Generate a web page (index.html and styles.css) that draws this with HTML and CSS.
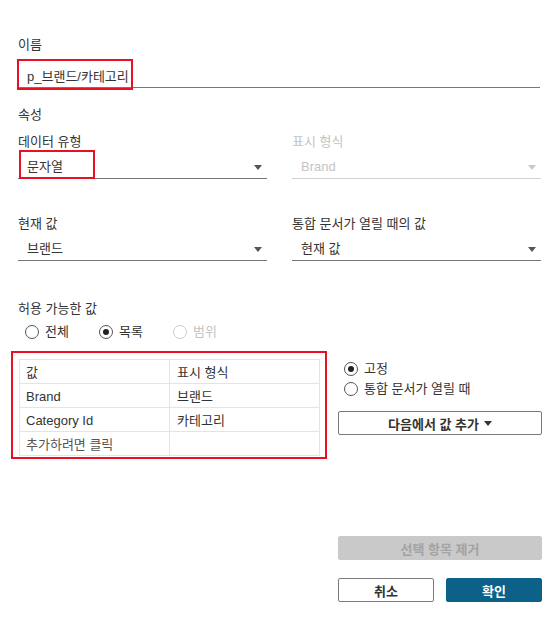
FILE: index.html
```html
<!DOCTYPE html>
<html lang="ko">
<head>
  <meta charset="UTF-8" />
  <title>매개 변수 편집</title>
  <link rel="stylesheet" href="styles.css">
</head>
<body>
  <div class="dialog">
    <div class="label first">이름</div>
    <div class="input">p_브랜드/카테고리<span class="annot annot-name"></span></div>

    <div class="section-title">속성</div>

    <div class="grid">
      <div class="field">
        <div class="label">데이터 유형</div>
        <div class="select">문자열<span class="caret"></span><span class="annot annot-type"></span></div>
      </div>
      <div class="field disabled">
        <div class="label">표시 형식</div>
        <div class="select">Brand<span class="caret"></span></div>
      </div>
      <div class="field">
        <div class="label">현재 값</div>
        <div class="select">브랜드<span class="caret"></span></div>
      </div>
      <div class="field">
        <div class="label">통합 문서가 열릴 때의 값</div>
        <div class="select">현재 값<span class="caret"></span></div>
      </div>
    </div>

    <div class="label allowed">허용 가능한 값</div>
    <div class="radio-row">
      <span class="radio"><span class="circle"></span>전체</span>
      <span class="radio"><span class="circle checked"></span>목록</span>
      <span class="radio disabled"><span class="circle"></span>범위</span>
    </div>

    <div class="list-area">
      <div class="table-wrap">
        <table class="values">
          <tr><td>값</td><td>표시 형식</td></tr>
          <tr><td>Brand</td><td>브랜드</td></tr>
          <tr><td>Category Id</td><td>카테고리</td></tr>
          <tr><td class="hint">추가하려면 클릭</td><td></td></tr>
        </table>
        <span class="annot annot-table"></span>
      </div>
      <div class="side">
        <div class="radio-list">
          <span class="radio"><span class="circle checked"></span>고정</span>
          <span class="radio"><span class="circle"></span>통합 문서가 열릴 때</span>
        </div>
        <button class="btn add-btn">다음에서 값 추가 <span class="small-caret"></span></button>
      </div>
    </div>

    <div class="footer">
      <button class="btn remove-btn">선택 항목 제거</button>
      <div class="footer-row">
        <button class="btn cancel-btn">취소</button>
        <button class="btn ok-btn">확인</button>
      </div>
    </div>
  </div>
</body>
</html>
```

FILE: styles.css
```css
* {
  box-sizing: border-box;
  margin: 0;
  padding: 0;
}

body {
  font-family: "Liberation Sans", "Noto Sans CJK KR", sans-serif;
  font-size: 13px;
  color: #333;
  background: #fff;
}

.dialog {
  width: 560px;
  padding: 35px 18px 0 18px;
}

/* text sits a little low in its line box, like the original */
.label {
  height: 18px;
  padding-top: 1px;
  line-height: 18px;
  color: #333;
}

.field .label {
  padding-top: 0;
}

.input {
  position: relative;
  width: 522px;
  height: 25px;
  margin-top: 10px;
  padding: 2px 0 0 9px;
  line-height: 24px;
  border-bottom: 1px solid #767676;
}

.section-title {
  height: 18px;
  margin-top: 17px;
  padding-top: 1px;
  line-height: 18px;
}

.grid {
  display: grid;
  grid-template-columns: 249px 249px;
  column-gap: 25px;
  row-gap: 36px;
  margin-top: 10px;
}

.select {
  position: relative;
  height: 24px;
  margin-top: 4px;
  padding: 1px 0 0 9px;
  line-height: 22px;
  border-bottom: 1px solid #767676;
}

.caret {
  position: absolute;
  right: 5px;
  top: 10px;
  border-left: 4px solid transparent;
  border-right: 4px solid transparent;
  border-top: 5px solid #555;
}

.disabled .label,
.disabled .select {
  color: #c4c4c4;
}

.disabled .select {
  border-bottom-color: #cfcfcf;
}

.disabled .caret {
  border-top-color: #c8c8c8;
}

.allowed {
  margin-top: 38px;
}

.radio-row {
  display: flex;
  margin-top: 6px;
  padding-left: 7px;
  height: 18px;
}

.radio-row .radio {
  width: 74px;
}

.radio {
  display: flex;
  align-items: center;
  gap: 6px;
  line-height: 18px;
}

.circle {
  width: 14px;
  height: 14px;
  border: 1px solid #555;
  border-radius: 50%;
  display: flex;
  align-items: center;
  justify-content: center;
  background: #fff;
}

.circle.checked::after {
  content: "";
  width: 6px;
  height: 6px;
  border-radius: 50%;
  background: #222;
}

.radio.disabled {
  color: #c4c4c4;
}

.radio.disabled .circle {
  border-color: #cdcdcd;
}

.list-area {
  display: flex;
  margin-top: 18px;
}

.table-wrap {
  position: relative;
  margin-left: 1px;
  width: 301px;
}

.values {
  width: 301px;
  border-collapse: collapse;
  table-layout: fixed;
}

.values td {
  height: 24px;
  border: 1px solid #e4e4e4;
  padding: 2px 6px 0 6px;
  line-height: 20px;
  color: #333;
}

.values td:first-child {
  width: 150px;
}

.values td:last-child {
  padding-left: 7px;
}

.values .hint {
  color: #555;
}

.side {
  width: 204px;
  margin-left: 18px;
  display: flex;
  flex-direction: column;
}

.radio-list {
  display: flex;
  flex-direction: column;
  gap: 2px;
  padding-left: 6px;
  margin-top: 1px;
}

.radio-list .radio {
  height: 18px;
}

.btn {
  font-family: inherit;
  font-size: 13px;
  font-weight: bold;
  height: 24px;
  border-radius: 2px;
  background: #fff;
  color: #333;
  border: 1px solid #7a7a7a;
  cursor: pointer;
}

.add-btn {
  margin-top: 13px;
  width: 204px;
  display: flex;
  align-items: center;
  justify-content: center;
  gap: 5px;
}

.small-caret {
  border-left: 4px solid transparent;
  border-right: 4px solid transparent;
  border-top: 5px solid #333;
}

.footer {
  width: 204px;
  margin-left: 320px;
  margin-top: 80px;
}

.remove-btn {
  width: 204px;
  background: #c9c9c9;
  border-color: #c9c9c9;
  color: #a3a3a3;
}

.footer-row {
  display: flex;
  justify-content: space-between;
  margin-top: 18px;
}

.cancel-btn,
.ok-btn {
  width: 96px;
}

.ok-btn {
  background: #0d6189;
  border-color: #0d6189;
  color: #fff;
}

/* Red highlight boxes from the annotated screenshot */
.annot {
  position: absolute;
  border: 2px solid #e81123;
  pointer-events: none;
}

.annot-name {
  left: -1px;
  top: -4px;
  width: 116px;
  height: 31px;
}

.annot-type {
  left: 1px;
  top: -5px;
  width: 76px;
  height: 29px;
}

.annot-table {
  left: -8px;
  top: -8px;
  width: 316px;
  height: 108px;
}
```
